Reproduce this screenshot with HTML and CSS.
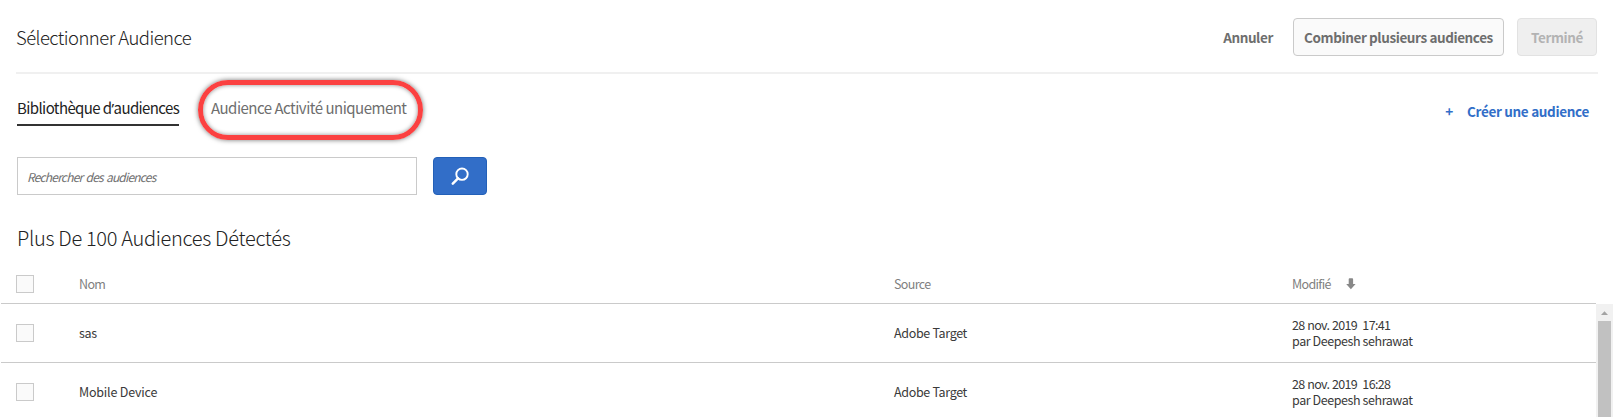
FILE: index.html
```html
<!DOCTYPE html>
<html lang="fr">
<head>
<meta charset="utf-8">
<title>Sélectionner Audience</title>
<link rel="stylesheet" href="styles.css">
</head>
<body>
<div class="dialog">
  <header class="header">
    <h1 class="title"><span>Sélectionner Audience</span></h1>
    <div class="actions">
      <button class="btn btn-quiet"><span>Annuler</span></button>
      <button class="btn btn-combine"><span>Combiner plusieurs audiences</span></button>
      <button class="btn btn-done" disabled><span>Terminé</span></button>
    </div>
  </header>
  <nav class="tabs">
    <a class="tab tab-active"><span>Bibliothèque d<span class="apostrophe">’</span>audiences</span></a>
    <a class="tab tab-activity"><span>Audience Activité uniquement</span><i class="highlight"></i></a>
    <a class="create"><span class="plus">+</span><span class="create-label">Créer une audience</span></a>
  </nav>
  <div class="search">
    <div class="field"><span>Rechercher des audiences</span></div>
    <button class="search-btn" aria-label="Rechercher">
      <svg width="18" height="18" viewBox="0 0 18 18" fill="none" stroke="#fff"><circle cx="11" cy="7.2" r="5.7" stroke-width="1.9"/><path d="M7 11.4 1.8 16.6" stroke-width="2.5" stroke-linecap="round"/></svg>
    </button>
  </div>
  <h2 class="count"><span>Plus De 100 Audiences Détectés</span></h2>
  <div class="row row-head">
    <i class="check"></i><span class="name">Nom</span><span class="source">Source</span>
    <span class="modified sort"><span class="sort-label">Modifié</span><svg width="10" height="12" viewBox="0 0 10 12" fill="#888"><path d="M2.7 1.2Q2.7.3 3.6.3H6.2Q7.1.3 7.1 1.2V6H9.6L4.9 11.2.2 6H2.7Z"/></svg></span>
  </div>
  <div class="list">
    <div class="rows">
      <div class="row"><i class="check"></i><span class="name">sas</span><span class="source">Adobe Target</span>
        <div class="modified"><div class="date">28 nov. 2019&nbsp; 17:41</div><div class="by">par Deepesh sehrawat</div></div></div>
      <div class="row"><i class="check"></i><span class="name name-mobile">Mobile Device</span><span class="source">Adobe Target</span>
        <div class="modified"><div class="date">28 nov. 2019&nbsp; 16:28</div><div class="by">par Deepesh sehrawat</div></div></div>
    </div>
    <div class="scrollbar"><svg width="17" height="17" viewBox="0 0 17 17"><path d="M5 11 8.5 7.2 12 11Z" fill="#a3a3a3"/></svg><div class="thumb"></div></div>
  </div>
</div>
</body>
</html>
```
FILE: styles.css
```css
* { box-sizing: border-box; }
body { margin: 0; background: #fff; color: #3a3a3a; font-family: "Noto Sans CJK SC", "Noto Sans", sans-serif; font-size: 12.5px; overflow: hidden; }
.dialog { height: 417px; overflow: hidden; display: flex; flex-direction: column; }
h1, h2 { margin: 0; font-weight: 300; white-space: nowrap; }
button { font: inherit; padding: 0; border: 0; background: none; }
.header { flex: none; height: 74px; margin: 0 16px; border-bottom: 2px solid #f0f0f0; display: flex; justify-content: space-between; }
.title { padding: 23px 0 0 0; font-size: 18.5px; line-height: 28px; letter-spacing: -.55px; color: #222; }
.actions { display: flex; padding-top: 18px; }
.btn { height: 38px; font-weight: 700; font-size: 13.5px; line-height: 34px; letter-spacing: -.4px; color: #6e6e6e; white-space: nowrap; border: 1px solid transparent; border-radius: 4px; }
.btn-quiet { width: 52px; margin-right: 19px; }
.btn-combine { width: 211px; border-color: #cacaca; background: #fafafa; }
.btn-done { width: 80px; margin: 0 1px 0 13px; border-color: #e2e2e2; background: #efefef; color: #b3b3b3; }
.tabs { flex: none; height: 83px; padding: 16px 25px 0 17px; display: flex; align-items: flex-start; font-size: 15px; line-height: 35px; letter-spacing: -.5px; color: #6e6e6e; white-space: nowrap; }
.apostrophe { font-family: "Noto Sans", sans-serif; line-height: 1; }
.tab { position: relative; height: 36px; }
.tab-active { width: 162px; border-bottom: 2px solid #323232; letter-spacing: -.6px; color: #222; }
.tab-activity { margin-left: 32px; }
.highlight { position: absolute; left: -13px; top: -10px; width: 225px; height: 60px; border: 5px solid #fb4141; border-radius: 32px; box-shadow: 0 0 5px rgba(0,0,0,.55), inset 0 0 4px rgba(0,0,0,.45); }
.create { margin-left: auto; padding-top: 4px; display: flex; gap: 14px; font-weight: 700; font-size: 13.5px; letter-spacing: -.32px; color: #326ec8; }
.search { flex: none; height: 38px; display: flex; gap: 16px; padding-left: 17px; }
.field { width: 400px; border: 1px solid #cacaca; padding-left: 9px; font-size: 12px; letter-spacing: -.81px; word-spacing: 1.3px; line-height: 37px; font-style: italic; color: #6e6e6e; }
.search-btn { width: 54px; border: 1px solid #2360b8; border-radius: 4px; background: #326ec8; display: flex; align-items: center; justify-content: center; }
.count { flex: none; height: 70px; padding: 28px 0 0 17px; font-size: 20px; line-height: 30px; letter-spacing: -.31px; color: #222; }
.row { height: 59px; display: grid; grid-template-columns: 63px 815px 398px 1fr; align-items: center; padding-left: 16px; border-bottom: 1px solid #cacaca; line-height: 16px; letter-spacing: -.33px; white-space: nowrap; }
.row-head { flex: none; height: 39px; margin: 0 18px 0 1px; padding-left: 15px; letter-spacing: -.65px; color: #808080; }
.name-mobile { letter-spacing: -.2px; }
.date { letter-spacing: -.68px; word-spacing: .6px; }
.by { letter-spacing: -.42px; }
.check { width: 18px; height: 18px; border: 1px solid #cacaca; background: #fafafa; }
.sort { display: flex; align-items: center; }
.sort-label { width: 54px; }
.list { flex: 1; min-height: 0; display: flex; }
.rows { flex: 1; margin-left: 1px; }
.rows .row { padding-left: 15px; }
.scrollbar { width: 17px; margin-right: 1px; background: #f1f1f1; display: flex; flex-direction: column; align-items: center; }
.thumb { width: 13px; flex: 1; background: #c1c1c1; }
```
